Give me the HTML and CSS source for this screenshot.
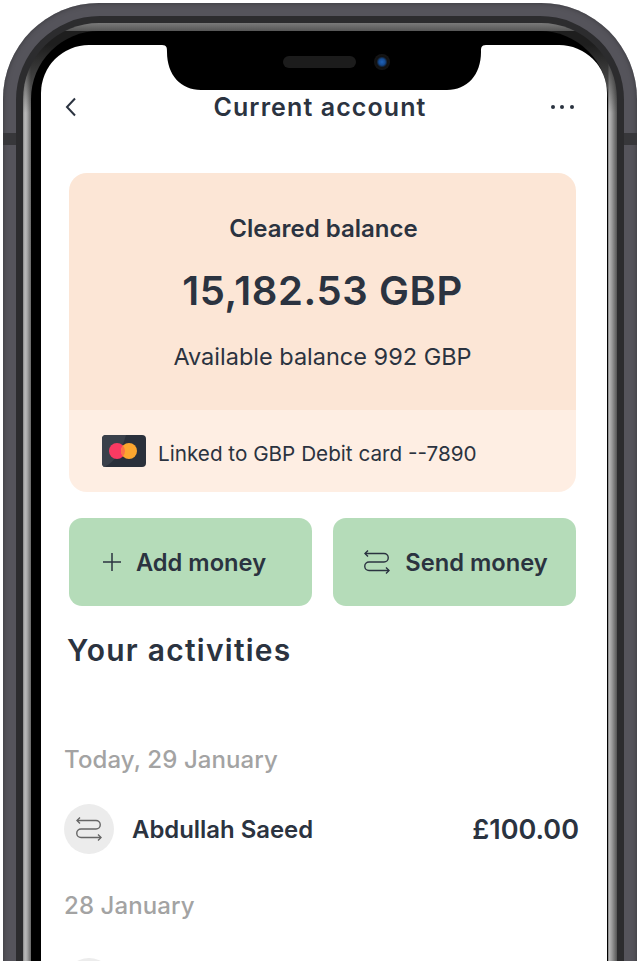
FILE: index.html
```html
<!DOCTYPE html>
<html lang="en">
<head>
  <meta charset="UTF-8" />
  <meta name="viewport" content="width=device-width, initial-scale=1.0" />
  <title>Current account</title>
  <link rel="stylesheet" href="styles.css">
</head>
<body>
  <div class="phone">
    <span class="antenna antenna-left"></span>
    <span class="antenna antenna-right"></span>
    <div class="frame-dark">
      <div class="frame-silver">
        <div class="frame-black">
          <div class="screen">

            <svg class="notch" width="324" height="45" viewBox="0 0 324 45">
              <path fill="#000" d="M0 0H324C319 0 319 3 319 7C319 30 305 45 285 45H39C19 45 5 30 5 7C5 3 5 0 0 0Z"/>
            </svg>
            <span class="speaker"></span>
            <span class="camera"></span>

            <header class="topbar">
              <svg class="back" width="12" height="20" viewBox="0 0 12 20">
                <path d="M10 1.500L2 10L10 18.500" fill="none" stroke="#2b3340" stroke-width="2"/>
              </svg>
              <h1>Current account</h1>
              <div class="more"><i></i><i></i><i></i></div>
            </header>

            <section class="balance-card">
              <div class="balance-top">
                <p class="cleared">Cleared balance</p>
                <p class="amount">15,182.53 GBP</p>
                <p class="available">Available balance 992 GBP</p>
              </div>
              <div class="balance-bottom">
                <svg width="44" height="32" viewBox="0 0 44 32">
                  <rect width="44" height="32" rx="4" fill="#2a303b"/>
                  <path d="M0 4a4 4 0 0 1 4-4h20C20 14 14 27 2 32C1 31.500 0 30 0 28Z" fill="#3a404a"/>
                  <circle cx="15" cy="16" r="8" fill="#fb3a62"/>
                  <circle cx="27" cy="16" r="8" fill="#fca62f"/>
                  <path d="M21 10.700a8 8 0 0 1 0 10.600a8 8 0 0 1 0-10.600Z" fill="#fc7148"/>
                </svg>
                <span>Linked to GBP Debit card --7890</span>
              </div>
            </section>

            <div class="actions">
              <button class="action action-add">
                <svg width="20" height="20" viewBox="0 0 20 20">
                  <path d="M10 1V19M1 10H19" fill="none" stroke="#2b3340" stroke-width="1.500"/>
                </svg>
                Add money
              </button>
              <button class="action action-send">
                <svg width="28" height="24" viewBox="0 0 28 24">
                  <use href="#swap"/>
                </svg>
                Send money
              </button>
            </div>

            <h2>Your activities</h2>

            <p class="day day-first">Today, 29 January</p>
            <div class="activity">
              <span class="avatar">
                <svg width="28" height="24" viewBox="0 0 28 24">
                  <use href="#swap"/>
                </svg>
              </span>
              <span class="name">Abdullah Saeed</span>
              <span class="price">£100.00</span>
            </div>
            <p class="day">28 January</p>
            <div class="activity activity-next">
              <span class="avatar"></span>
            </div>

          </div>
        </div>
      </div>
    </div>
  </div>

  <svg width="0" height="0" class="defs">
    <defs>
      <g id="swap" fill="none" stroke="currentColor" stroke-width="1.400">
        <path d="M5 .5L2 3.500L5 6.500"/>
        <path d="M2 3.500H21a4.250 4.250 0 0 1 0 8.500H6a4.250 4.250 0 0 0 0 8.500H26"/>
        <path d="M23 17.500L26 20.500L23 23.500"/>
      </g>
    </defs>
  </svg>
</body>
</html>
```

FILE: styles.css
```css
* {
  box-sizing: border-box;
}
html, body {
  height: 961px;
  overflow: hidden;
}
body {
  font-family: Inter, "Liberation Sans", sans-serif;
  background: #fff;
  color: #2b3340;
  margin: 0;
}
p, h1, h2 {
  margin: 0;
}
.defs {
  position: absolute;
}

/* phone frame */
.phone {
  position: relative;
  width: 634px;
  height: 980px;
  margin: 3px 0 0 3px;
  padding: 13px 13px 0;
  background: #55545b;
  border-radius: 96px 96px 0 0;
  box-shadow: inset 0 0 5px #38383c;
}
.antenna {
  position: absolute;
  top: 130px;
  width: 13px;
  height: 12px;
  background: #37373a;
}
.antenna-left {
  left: 0;
}
.antenna-right {
  right: 0;
}
.frame-dark {
  height: 100%;
  padding: 7px 7px 0;
  background: #2c2c2e;
  border-radius: 84px 84px 0 0;
}
.frame-silver {
  height: 100%;
  padding: 8px 9px 0 8px;
  background:
    linear-gradient(180deg, #7a7a7a 0, #565656 8px, transparent 8px),
    linear-gradient(180deg, #1e1e1e 22px, transparent 90px),
    linear-gradient(90deg, #8a8a8a 0, #bbb 2px, #aaa 4px, #666 8px, #666 calc(100% - 9px), #bbb calc(100% - 8px), #999 calc(100% - 5px), #555 100%);
  border-radius: 76px 76px 0 0;
}
.frame-black {
  height: 100%;
  padding: 14px 1px 0 10px;
  background: #000;
  border-radius: 68px 68px 0 0;
}

/* screen */
.screen {
  position: relative;
  height: 100%;
  padding: 0 31px 0 23px;
  background: #fff;
  border-radius: 48px 48px 0 0;
}
.notch {
  position: absolute;
  top: 0;
  left: 121px;
}
.speaker {
  position: absolute;
  top: 11px;
  left: 242px;
  width: 73px;
  height: 12px;
  background: #1c1c1c;
  border-radius: 6px;
}
.camera {
  position: absolute;
  top: 9px;
  left: 333px;
  width: 16px;
  height: 16px;
  background: radial-gradient(circle at 50% 50%, #1f62b8 0, #154a90 28%, #111 48%, #1a1a1c 100%);
  border-radius: 50%;
}
.topbar {
  display: grid;
  grid-template-columns: 1fr auto 1fr;
  align-items: center;
  height: 82px;
  padding-top: 42px;
}
.topbar h1 {
  font-size: 25px;
  font-weight: 600;
  letter-spacing: 1.100px;
}
.back {
  margin-left: 1px;
}
.more {
  display: flex;
  justify-self: end;
  gap: 5.500px;
  margin-right: 2.500px;
}
.more i {
  width: 4px;
  height: 4px;
  background: #2b3340;
  border-radius: 50%;
}

/* balance card */
.balance-card {
  width: 507px;
  margin: 46px 0 0 5px;
  border-radius: 18px;
  overflow: hidden;
}
.balance-top {
  height: 237px;
  padding-top: 41px;
  background: #fce6d6;
  text-align: center;
}
.cleared {
  padding-left: 2px;
  font-size: 24px;
  font-weight: 600;
  line-height: 30px;
}
.amount {
  margin-top: 21px;
  font-size: 40px;
  font-weight: 600;
  letter-spacing: .6px;
  line-height: 52px;
}
.available {
  margin-top: 25px;
  font-size: 23.500px;
  line-height: 30px;
}
.balance-bottom {
  display: flex;
  align-items: center;
  gap: 12px;
  height: 82px;
  padding-left: 33px;
  background: #feeee3;
  font-size: 20.700px;
}
.balance-bottom span {
  padding-top: 4px;
}

/* buttons */
.actions {
  display: grid;
  grid-template-columns: 1fr 1fr;
  gap: 21px;
  margin: 26px 0 0 5px;
  width: 507px;
}
.action {
  display: flex;
  align-items: center;
  justify-content: center;
  gap: 14px;
  height: 88px;
  background: #b5dcb9;
  color: #2b3340;
  font-family: inherit;
  font-size: 23.700px;
  font-weight: 600;
  border: none;
  border-radius: 13px;
}
.action-add {
  padding-right: 19px;
}
.action-send {
  padding-left: 8px;
}

/* activity list */
h2 {
  margin: 23px 0 0 3px;
  font-size: 30px;
  font-weight: 600;
  letter-spacing: 1.250px;
  line-height: 42px;
}
.day {
  color: #a3a3a3;
  font-size: 24px;
  font-weight: 500;
  letter-spacing: .1px;
  line-height: 30px;
}
.day-first {
  margin-top: 74px;
}
.activity {
  display: flex;
  align-items: center;
  gap: 18px;
  height: 50px;
  margin: 29px -3px 37px 0;
  color: #2b3340;
}
.activity-next {
  margin-top: 37px;
}
.avatar {
  display: flex;
  align-items: center;
  justify-content: center;
  width: 50px;
  height: 50px;
  background: #ececec;
  color: #666;
  border-radius: 50%;
}
.name {
  flex: 1;
  font-size: 23.900px;
  font-weight: 600;
}
.price {
  font-size: 27px;
  font-weight: 600;
}
```
